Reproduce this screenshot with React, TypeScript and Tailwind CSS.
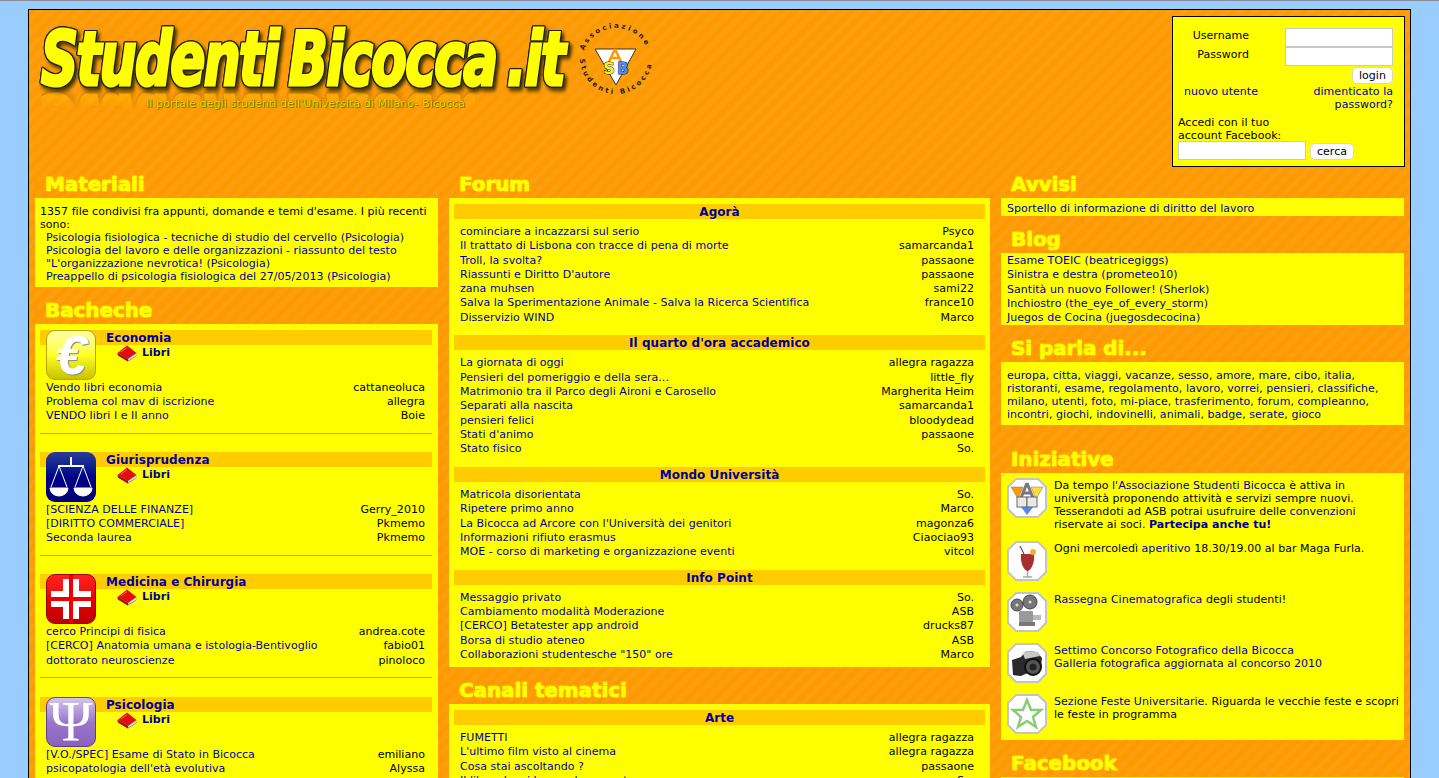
import React from "react";

const FONT = "font-['Verdana','DejaVu_Sans',sans-serif]";
const L = ({ children }: { children: React.ReactNode }) => <a className="text-[#000099]">{children}</a>;

function H({ children, className = "" }: { children: React.ReactNode; className?: string }) {
  return (
    <h2 className={"pl-[10px] h-[29px] flex items-center text-[20px] font-bold text-[#ffff00] [-webkit-text-stroke:0.6px_#ffff00] [text-shadow:0_0_2px_#ffee00] leading-none tracking-[-0.1px] " + className}>
      {children}
    </h2>
  );
}

function Row({ t, u }: { t: string; u: string }) {
  return (
    <div className="flex justify-between h-[14.3px] leading-[14.3px] whitespace-nowrap">
      <L>{t}</L>
      <span>{u}</span>
    </div>
  );
}

function Book() {
  return (
    <svg width="20" height="17" viewBox="0 0 20 17" className="shrink-0">
      <path d="M0.5 8 L1 10.5 L11 16.5 L19.5 11 L19.5 8.5 L11 14 Z" fill="#666" />
      <path d="M11 13.5 L19.5 8.5 L19.5 10.5 L11 15.8 Z" fill="#e8e8e8" />
      <path d="M0.5 8 L10 0.5 L19.5 8 L11 14 Z" fill="#e01010" />
      <path d="M0.5 8 L11 14 L11 16.5 L1 10.5 Z" fill="#a01010" />
      <path d="M4 7 L10 2.5" stroke="#ff6060" strokeWidth="1" />
    </svg>
  );
}

function BoardIcon({ kind }: { kind: string }) {
  if (kind === "euro")
    return (
      <div className="w-[50px] h-[50px] shrink-0 rounded-[9px] border border-[#b3a800] bg-gradient-to-b from-[#ffffa0] via-[#ffff20] to-[#c9c300] flex items-center justify-center">
        <span className="text-white text-[56px] font-bold leading-[48px] italic font-['Liberation_Sans',sans-serif] [text-shadow:1px_1px_1px_#888]">€</span>
      </div>
    );
  if (kind === "law")
    return (
      <div className="w-[50px] h-[50px] shrink-0 rounded-[9px] bg-gradient-to-b from-[#2a3a99] via-[#000088] to-[#000077]">
        <svg viewBox="0 0 50 50" width="50" height="50" fill="none" stroke="#fff" strokeWidth="1">
          <path d="M25 5 V13 M12 14 H38" strokeWidth="2" />
          <path d="M13 14 L5 35 M13 14 L21 35 M37 14 L29 35 M37 14 L45 35" />
          <path d="M4 36 H22 A9 8 0 0 1 4 36 Z M28 36 H46 A9 8 0 0 1 28 36 Z" fill="#fff" />
        </svg>
      </div>
    );
  if (kind === "med")
    return (
      <div className="w-[50px] h-[50px] shrink-0 rounded-[9px] bg-gradient-to-b from-[#ff2222] via-[#ee0000] to-[#bb0000] border border-[#990000]">
        <svg viewBox="1 1 48 48" width="48" height="48">
          <rect x="5" y="17" width="40" height="16" fill="#fff" />
          <rect x="17" y="5" width="16" height="40" fill="#fff" />
          <rect x="23" y="1" width="4" height="48" fill="#ee0000" />
          <rect x="1" y="23" width="48" height="4" fill="#ee0000" />
        </svg>
      </div>
    );
  return (
    <div className="w-[50px] h-[50px] shrink-0 rounded-[9px] border border-[#5c3d8f] bg-gradient-to-b from-[#d4c6ea] via-[#9b77cc] to-[#8a62bd] flex items-center justify-center">
      <span className="text-white text-[58px] leading-[48px] font-['Liberation_Serif',serif]">Ψ</span>
    </div>
  );
}

function Board({ kind, title, rows, last }: { kind: string; title: string; rows: [string, string][]; last?: boolean }) {
  return (
    <section className={last ? "" : "h-[122.2px]"}>
      <div className="relative h-[50px]">
        <div className="h-[15px] bg-[#ffcc00] pl-[66px] text-[12px] font-bold text-[#000099] leading-[16px]">{title}</div>
        <div className="absolute left-[6px] top-0"><BoardIcon kind={kind} /></div>
        <div className="flex items-start pl-[77px] gap-[5px] font-bold text-[#000099] leading-[15px]">
          <Book />
          <span>Libri</span>
        </div>
      </div>
      <div className="pl-[6px] pr-[7px] pt-[1px]">
        {rows.map((r) => (
          <div key={r[0]} className="flex justify-between h-[14.1px] leading-[14.1px] whitespace-nowrap">
            <L>{r[0]}</L>
            <span>{r[1]}</span>
          </div>
        ))}
      </div>
      {!last && <div className="mt-[9.5px] h-px bg-[#9999cc]" />}
    </section>
  );
}

function Zone({ title, rows, className = "" }: { title: string; rows: [string, string][]; className?: string }) {
  return (
    <section className={className}>
      <div className="h-[15px] bg-[#ffcc00] text-center text-[12px] font-bold text-[#000099] leading-[16px]">{title}</div>
      <div className="pl-[6px] pr-[11px] pt-[6px]">
        {rows.map((r) => <Row key={r[0]} t={r[0]} u={r[1]} />)}
      </div>
    </section>
  );
}

function Octagon({ children }: { children: React.ReactNode }) {
  return (
    <svg width="40" height="40" viewBox="0 0 40 40" className="shrink-0">
      <polygon points="9,1 31,1 39,9 39,31 31,39 9,39 1,31 1,9" fill="#fff" stroke="#c4c4c4" strokeWidth="2" />
      {children}
    </svg>
  );
}

function Init({ icon, children, h }: { icon: React.ReactNode; children: React.ReactNode; h: string }) {
  return (
    <div className={"flex gap-[7px] leading-[13px] " + h}>
      <Octagon>{icon}</Octagon>
      <div className="pt-[1px]">{children}</div>
    </div>
  );
}

const Panel = ({ children, className = "" }: { children: React.ReactNode; className?: string }) => (
  <div className={"bg-[#ffff00] " + className}>{children}</div>
);

const TAGS = "europa, citta, viaggi, vacanze, sesso, amore, mare, cibo, italia, ristoranti, esame, regolamento, lavoro, vorrei, pensieri, classifiche, milano, utenti, foto, mi-piace, trasferimento, forum, compleanno, incontri, giochi, indovinelli, animali, badge, serate, gioco".split(", ");

function Logo() {
  return (
    <div className="relative w-[640px] h-[120px]">
      <div className="absolute left-[12px] top-[6px] h-[74px] w-[560px] whitespace-nowrap text-[#ffff00] font-['DejaVu_Sans_Condensed','DejaVu_Sans',sans-serif] font-bold italic text-[74px] leading-[74px] tracking-[-2px] [word-spacing:-8px] origin-left scale-x-[0.775] [-webkit-text-stroke:3px_#ffff00] [filter:drop-shadow(1px_0_0_#222)_drop-shadow(-1px_0_0_#222)_drop-shadow(0_1px_0_#222)_drop-shadow(0_-1px_0_#222)_drop-shadow(3px_3px_2px_#443300)] [-webkit-box-reflect:below_-12px_linear-gradient(transparent_66%,rgba(0,0,0,0.28))]">
        Studenti Bicocca .it
      </div>
      <div className="absolute left-[117px] top-[81px] text-[11px] leading-[13px] whitespace-nowrap tracking-[0.1px] text-[#eedd00] [text-shadow:0_0_1px_#665500,1px_1px_0_#887700]">
        Il portale degli studenti dell'Università di Milano- Bicocca
      </div>
      <svg className="absolute left-[546px] top-[4px]" width="85" height="80" viewBox="0 0 85 80">
        <defs>
          <path id="ringTop" d="M7 42 A34 34 0 0 1 75 42" />
          <path id="ringBot" d="M5 38 A36 36 0 0 0 77 38" />
        </defs>
        <text fontSize="7" fill="#222" letterSpacing="2.4" fontWeight="bold">
          <textPath href="#ringTop" startOffset="11%">Associazione</textPath>
        </text>
        <text fontSize="7" fill="#222" letterSpacing="2.6" fontWeight="bold">
          <textPath href="#ringBot" startOffset="1%">Studenti Bicocca</textPath>
        </text>
        <polygon points="20,29 61,29 41,65" fill="#fff" stroke="#333" strokeWidth="1" />
        <path d="M40 29 L33 44 M40 29 L47 44 M36 38 H44" stroke="#ff9900" strokeWidth="2.5" fill="none" />
        <text x="34" y="54" fontSize="16" fontWeight="bold" textAnchor="middle" fill="#ffee22" stroke="#222" strokeWidth="1" paintOrder="stroke">S</text>
        <text x="48" y="54" fontSize="15" fontWeight="bold" textAnchor="middle" fill="#5588ee" stroke="#222" strokeWidth="1" paintOrder="stroke">B</text>
      </svg>
    </div>
  );
}

function Login() {
  const input = "block bg-white border border-[#c8c8c8] rounded-none";
  const btn = "bg-white rounded-[5px] border border-[#d8d8c0] text-center";
  return (
    <div className="w-[233px] h-[151px] border border-black bg-[#ffff00] shrink-0 pl-[5px] pr-[11px] leading-[13px]">
      <div className="flex pt-[11px]">
        <div className="w-[107px] text-right pr-[36px] shrink-0">
          <div className="h-[19px] leading-[15px]">Username</div>
          <div className="h-[19px] leading-[15px]">Password</div>
        </div>
        <div className="flex-1">
          <div className={input + " h-[19px]"} />
          <div className={input + " h-[19px]"} />
        </div>
      </div>
      <div className="flex justify-end mt-[1px]">
        <div className={btn + " w-[41px] h-[17px] leading-[16px]"}>login</div>
      </div>
      <div className="flex justify-between mt-[1px]">
        <a className="text-[#000099] pl-[6px]">nuovo utente</a>
        <a className="text-[#000099] text-right w-[90px]">dimenticato la password?</a>
      </div>
      <div className="mt-[5px]">Accedi con il tuo<br />account Facebook:</div>
      <div className="flex items-end gap-[4px] mt-[-1px]">
        <div className={input + " w-[128px] h-[19px]"} />
        <div className={btn + " w-[44px] h-[17px] leading-[16px]"}>cerca</div>
      </div>
    </div>
  );
}

export default function App() {
  return (
    <div className={"h-[778px] overflow-hidden bg-[#99ccff] text-[11px] tracking-[0.035px] text-black " + FONT}>
      <div className="h-px bg-[#8a8a96]" />
      <div className="mx-[28px] mt-[8px] border border-black h-[900px] bg-[#ff9900] bg-[repeating-linear-gradient(135deg,#ff9900_0px,#ff9900_5px,#fd9e0e_5px,#fd9e0e_10px)] px-[6px]">
        <header className="flex justify-between items-start pt-[6px] h-[159px]">
          <div className="-ml-[6px]"><Logo /></div>
          <div className="-mr-[1px]"><Login /></div>
        </header>
        <div className="flex items-start gap-[11px]">
          <div className="w-[403px] shrink-0">
            <H>Materiali</H>
            <Panel className="h-[89px] px-[5px] pt-[7px] leading-[13px]">
              <div>1357 file condivisi fra appunti, domande e temi d'esame. I più recenti sono:</div>
              <div className="pl-[6px]">
                <div><L>Psicologia fisiologica - tecniche di studio del cervello</L> <L>(Psicologia)</L></div>
                <div><L>Psicologia del lavoro e delle organizzazioni - riassunto del testo "L'organizzazione nevrotica! (Psicologia)</L></div>
                <div><L>Preappello di psicologia fisiologica del 27/05/2013 (Psicologia)</L></div>
              </div>
            </Panel>
            <H className="mt-[8px]">Bacheche</H>
            <Panel className="pl-[5px] pr-[6px] pt-[6px] h-[500px]">
              <Board kind="euro" title="Economia" rows={[["Vendo libri economia", "cattaneoluca"], ["Problema col mav di iscrizione", "allegra"], ["VENDO libri I e II anno", "Boie"]]} />
              <Board kind="law" title="Giurisprudenza" rows={[["[SCIENZA DELLE FINANZE]", "Gerry_2010"], ["[DIRITTO COMMERCIALE]", "Pkmemo"], ["Seconda laurea", "Pkmemo"]]} />
              <Board kind="med" title="Medicina e Chirurgia" rows={[["cerco Principi di fisica", "andrea.cote"], ["[CERCO] Anatomia umana e istologia-Bentivoglio", "fabio01"], ["dottorato neuroscienze", "pinoloco"]]} />
              <Board kind="psi" title="Psicologia" last rows={[["[V.O./SPEC] Esame di Stato in Bicocca", "emiliano"], ["psicopatologia dell'età evolutiva", "Alyssa"]]} />
            </Panel>
          </div>

          <div className="w-[541px] shrink-0">
            <H>Forum</H>
            <Panel className="px-[5px] pt-[6px] h-[469px]">
              <Zone title="Agorà" rows={[["cominciare a incazzarsi sul serio", "Psyco"], ["Il trattato di Lisbona con tracce di pena di morte", "samarcanda1"], ["Troll, la svolta?", "passaone"], ["Riassunti e Diritto D'autore", "passaone"], ["zana muhsen", "sami22"], ["Salva la Sperimentazione Animale - Salva la Ricerca Scientifica", "france10"], ["Disservizio WIND", "Marco"]]} />
              <Zone className="mt-[10.4px]" title="Il quarto d'ora accademico" rows={[["La giornata di oggi", "allegra ragazza"], ["Pensieri del pomeriggio e della sera...", "little_fly"], ["Matrimonio tra il Parco degli Aironi e Carosello", "Margherita Heim"], ["Separati alla nascita", "samarcanda1"], ["pensieri felici", "bloodydead"], ["Stati d'animo", "passaone"], ["Stato fisico", "So."]]} />
              <Zone className="mt-[10.4px]" title="Mondo Università" rows={[["Matricola disorientata", "So."], ["Ripetere primo anno", "Marco"], ["La Bicocca ad Arcore con l'Università dei genitori", "magonza6"], ["Informazioni rifiuto erasmus", "Ciaociao93"], ["MOE - corso di marketing e organizzazione eventi", "vitcol"]]} />
              <Zone className="mt-[10.4px]" title="Info Point" rows={[["Messaggio privato", "So."], ["Cambiamento modalità Moderazione", "ASB"], ["[CERCO] Betatester app android", "drucks87"], ["Borsa di studio ateneo", "ASB"], ["Collaborazioni studentesche \"150\" ore", "Marco"]]} />
            </Panel>
            <H className="mt-[8px]">Canali tematici</H>
            <Panel className="px-[5px] pt-[6px] h-[120px]">
              <Zone title="Arte" rows={[["FUMETTI", "allegra ragazza"], ["L'ultimo film visto al cinema", "allegra ragazza"], ["Cosa stai ascoltando ?", "passaone"], ["Il libro che si legge al momento", "So."]]} />
            </Panel>
          </div>

          <div className="w-[403px] shrink-0">
            <H>Avvisi</H>
            <Panel className="h-[18px] px-[6px] leading-[21px]"><L>Sportello di informazione di diritto del lavoro</L></Panel>
            <H className="mt-[8px]">Blog</H>
            <Panel className="h-[72px] px-[6px] pt-[1px] leading-[14.3px]">
              <div><L>Esame TOEIC (beatricegiggs)</L></div>
              <div><L>Sinistra e destra (prometeo10)</L></div>
              <div><L>Santità un nuovo Follower! (Sherlok)</L></div>
              <div><L>Inchiostro (the_eye_of_every_storm)</L></div>
              <div><L>Juegos de Cocina (juegosdecocina)</L></div>
            </Panel>
            <H className="mt-[8px]">Si parla di...</H>
            <Panel className="h-[63px] px-[6px] pt-[7px] leading-[13px]">
              {TAGS.map((t, i) => (
                <React.Fragment key={t}>
                  <L>{t}</L>{i < TAGS.length - 1 ? ", " : ""}
                </React.Fragment>
              ))}
            </Panel>
            <H className="mt-[19px]">Iniziative</H>
            <Panel className="h-[267px] pl-[6px] pr-[4px] pt-[5px]">
              <Init h="h-[63px]" icon={
                <g>
                  <polygon points="4,9 16,9 11,21" fill="#ff9900" stroke="#777" strokeWidth="0.5" />
                  <polygon points="24,9 36,9 29,21" fill="#ffdd33" stroke="#777" strokeWidth="0.5" />
                  <polygon points="14,29 26,29 20,37" fill="#5588ee" />
                  <path d="M20 5 L14 20 M20 5 L26 20 M16 15 H24" stroke="#777" strokeWidth="3" fill="none" />
                  <rect x="10" y="19" width="10" height="10" fill="#e8e8e8" stroke="#666" />
                  <rect x="20" y="19" width="10" height="10" fill="#e8e8e8" stroke="#666" />
                </g>
              }>
                <div>Da tempo <L>l'Associazione Studenti Bicocca</L> è attiva in università proponendo attività e servizi sempre nuovi. Tesserandoti ad ASB potrai usufruire delle <L>convenzioni</L> riservate ai soci. <b className="text-[#000099]">Partecipa anche tu!</b></div>
              </Init>
              <Init h="h-[51px]" icon={
                <g>
                  <path d="M13 5 L18 15" stroke="#222" strokeWidth="1" />
                  <path d="M14 13 H27 C28 22 24 29 21 30 H20 C17 29 13 22 14 13 Z" fill="#a83030" />
                  <path d="M20.5 30 V36 M16 36 H25" stroke="#aaa" strokeWidth="1.5" />
                  <circle cx="26" cy="11" r="3" fill="#f5b030" />
                </g>
              }>
                <div>Ogni mercoledì <L>aperitivo</L> 18.30/19.00 al bar Maga Furla.</div>
              </Init>
              <Init h="h-[51px]" icon={
                <g>
                  <circle cx="10" cy="13" r="6" fill="#777" stroke="#444" />
                  <circle cx="10" cy="13" r="1.5" fill="#ddd" />
                  <circle cx="23" cy="10" r="7" fill="#777" stroke="#444" />
                  <circle cx="23" cy="10" r="1.5" fill="#ddd" />
                  <rect x="12" y="19" width="14" height="11" rx="1" fill="#999" />
                  <rect x="26" y="23" width="8" height="5" fill="#bbb" />
                  <rect x="12" y="30" width="16" height="4" fill="#777" />
                </g>
              }>
                <div><L>Rassegna Cinematografica</L> degli studenti!</div>
              </Init>
              <Init h="h-[51px]" icon={
                <g>
                  <path d="M5 17 L14 14 L19 8 L30 9 L35 15 L34 24 L14 33 L6 32 Z" fill="#2a2a2a" />
                  <path d="M16 11 L19 8 L30 9 L33 13 L18 16 Z" fill="#c8c8c8" />
                  <circle cx="26" cy="24" r="8" fill="#555" stroke="#111" strokeWidth="2" />
                  <circle cx="26" cy="24" r="3.5" fill="#222" />
                </g>
              }>
                <div><L>Settimo Concorso Fotografico della Bicocca</L><br /><L>Galleria fotografica aggiornata al concorso 2010</L></div>
              </Init>
              <Init h="h-[51px]" icon={
                <polygon points="20,6 24,16 34,16 26,23 29,33 20,27 11,33 14,23 6,16 16,16" fill="#fff" stroke="#88cc77" strokeWidth="2.5" />
              }>
                <div><L>Sezione Feste Universitarie</L>. Riguarda le vecchie feste e scopri le feste in programma</div>
              </Init>
            </Panel>
            <H className="mt-[8px]">Facebook</H>
            <Panel className="h-[40px]"><span /></Panel>
          </div>
        </div>
      </div>
    </div>
  );
}
